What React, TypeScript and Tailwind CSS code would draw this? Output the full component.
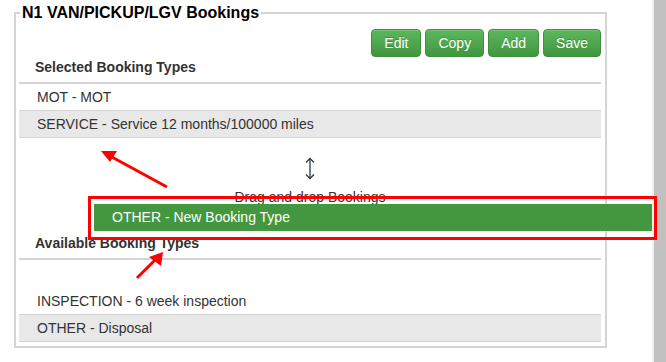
const buttons = ["Edit", "Copy", "Add", "Save"];

function Row({ label, shaded }: { label: string; shaded?: boolean }) {
  return (
    <div
      className={`h-[27px] border-b border-[#d4d4d4] pl-[18px] pt-[3px] text-[14px] leading-[20px] text-[#333] ${
        shaded ? "bg-[#e8e8e8]" : "bg-white"
      }`}
    >
      {label}
    </div>
  );
}

function Heading({ children }: { children: string }) {
  return (
    <div className="h-[25px] border-b-2 border-[#d4d4d4] pl-[16px] text-[14px] font-bold leading-[20px] text-[#333] box-content">
      {children}
    </div>
  );
}

function ResizeIcon() {
  return (
    <svg width="10" height="23" viewBox="0 0 10 23" fill="none" stroke="#2f3a44" strokeWidth="1.3">
      <path d="M5 1.5 V21.5" />
      <path d="M1 5.5 L5 1.5 L9 5.5" />
      <path d="M1 17.5 L5 21.5 L9 17.5" />
    </svg>
  );
}

export default function App() {
  return (
    <div className="relative flex h-[362px] w-[666px] overflow-hidden bg-white font-['Liberation_Sans',Arial,sans-serif]">
      {/* Page */}
      <div className="flex-1 pl-[14px] pt-[2px]">
        <fieldset className="w-[593px] border-2 border-[#d4d4d4] pl-[3px] pr-[4px] pb-[4px]">
          <legend className="ml-[1px] px-[2px] text-[16px] font-bold leading-[22px] text-black">
            N1 VAN/PICKUP/LGV Bookings
          </legend>

          {/* Toolbar */}
          <div className="mt-[5px] flex justify-end gap-[4px]">
            {buttons.map((b) => (
              <button
                key={b}
                className="flex h-[28px] items-center rounded-[4px] border border-[#3e8f3e] bg-linear-to-b from-[#5cb85c] to-[#419641] px-[12px] text-[14px] text-white shadow-[inset_0_1px_0_rgba(255,255,255,0.15)] [text-shadow:0_-1px_0_rgba(0,0,0,0.2)]"
              >
                {b}
              </button>
            ))}
          </div>

          {/* Selected */}
          <Heading>Selected Booking Types</Heading>
          <Row label="MOT - MOT" />
          <Row label="SERVICE - Service 12 months/100000 miles" shaded />

          {/* Drop zone */}
          <div className="flex h-[95px] flex-col items-center pt-[19px]">
            <ResizeIcon />
            <div className="mt-[7px] text-[14px] leading-[20px] text-[#333]">Drag and drop Bookings</div>
          </div>

          {/* Available */}
          <Heading>Available Booking Types</Heading>
          <div className="h-[28px]" />
          <Row label="INSPECTION - 6 week inspection" />
          <Row label="OTHER - Disposal" shaded />
        </fieldset>
      </div>

      {/* Scrollbar */}
      <div className="flex w-[14px]">
        <div className="w-[2px] bg-[#f0f0f0]" />
        <div className="flex-1 bg-[#c1c1c1]" />
      </div>

      {/* Dragged item with highlight */}
      <div className="absolute left-[88px] top-[196px] h-[44px] w-[569px] border-[3px] border-[#ff0000]">
        <div className="ml-[3px] mt-[5px] h-[27px] w-[558px] bg-[#43973f] pl-[18px] text-[14px] leading-[27px] text-white">
          OTHER - New Booking Type
        </div>
      </div>

      {/* Annotation arrows */}
      <svg className="pointer-events-none absolute left-0 top-0" width="666" height="362">
        <g stroke="#ff0000" strokeWidth="3" fill="#ff0000">
          <line x1="167" y1="187" x2="110" y2="156" />
          <polygon points="101,151 117,151 110,162" stroke="none" />
          <line x1="137" y1="278" x2="156" y2="259" />
          <polygon points="163,252 161,266 149,257" stroke="none" />
        </g>
      </svg>
    </div>
  );
}
